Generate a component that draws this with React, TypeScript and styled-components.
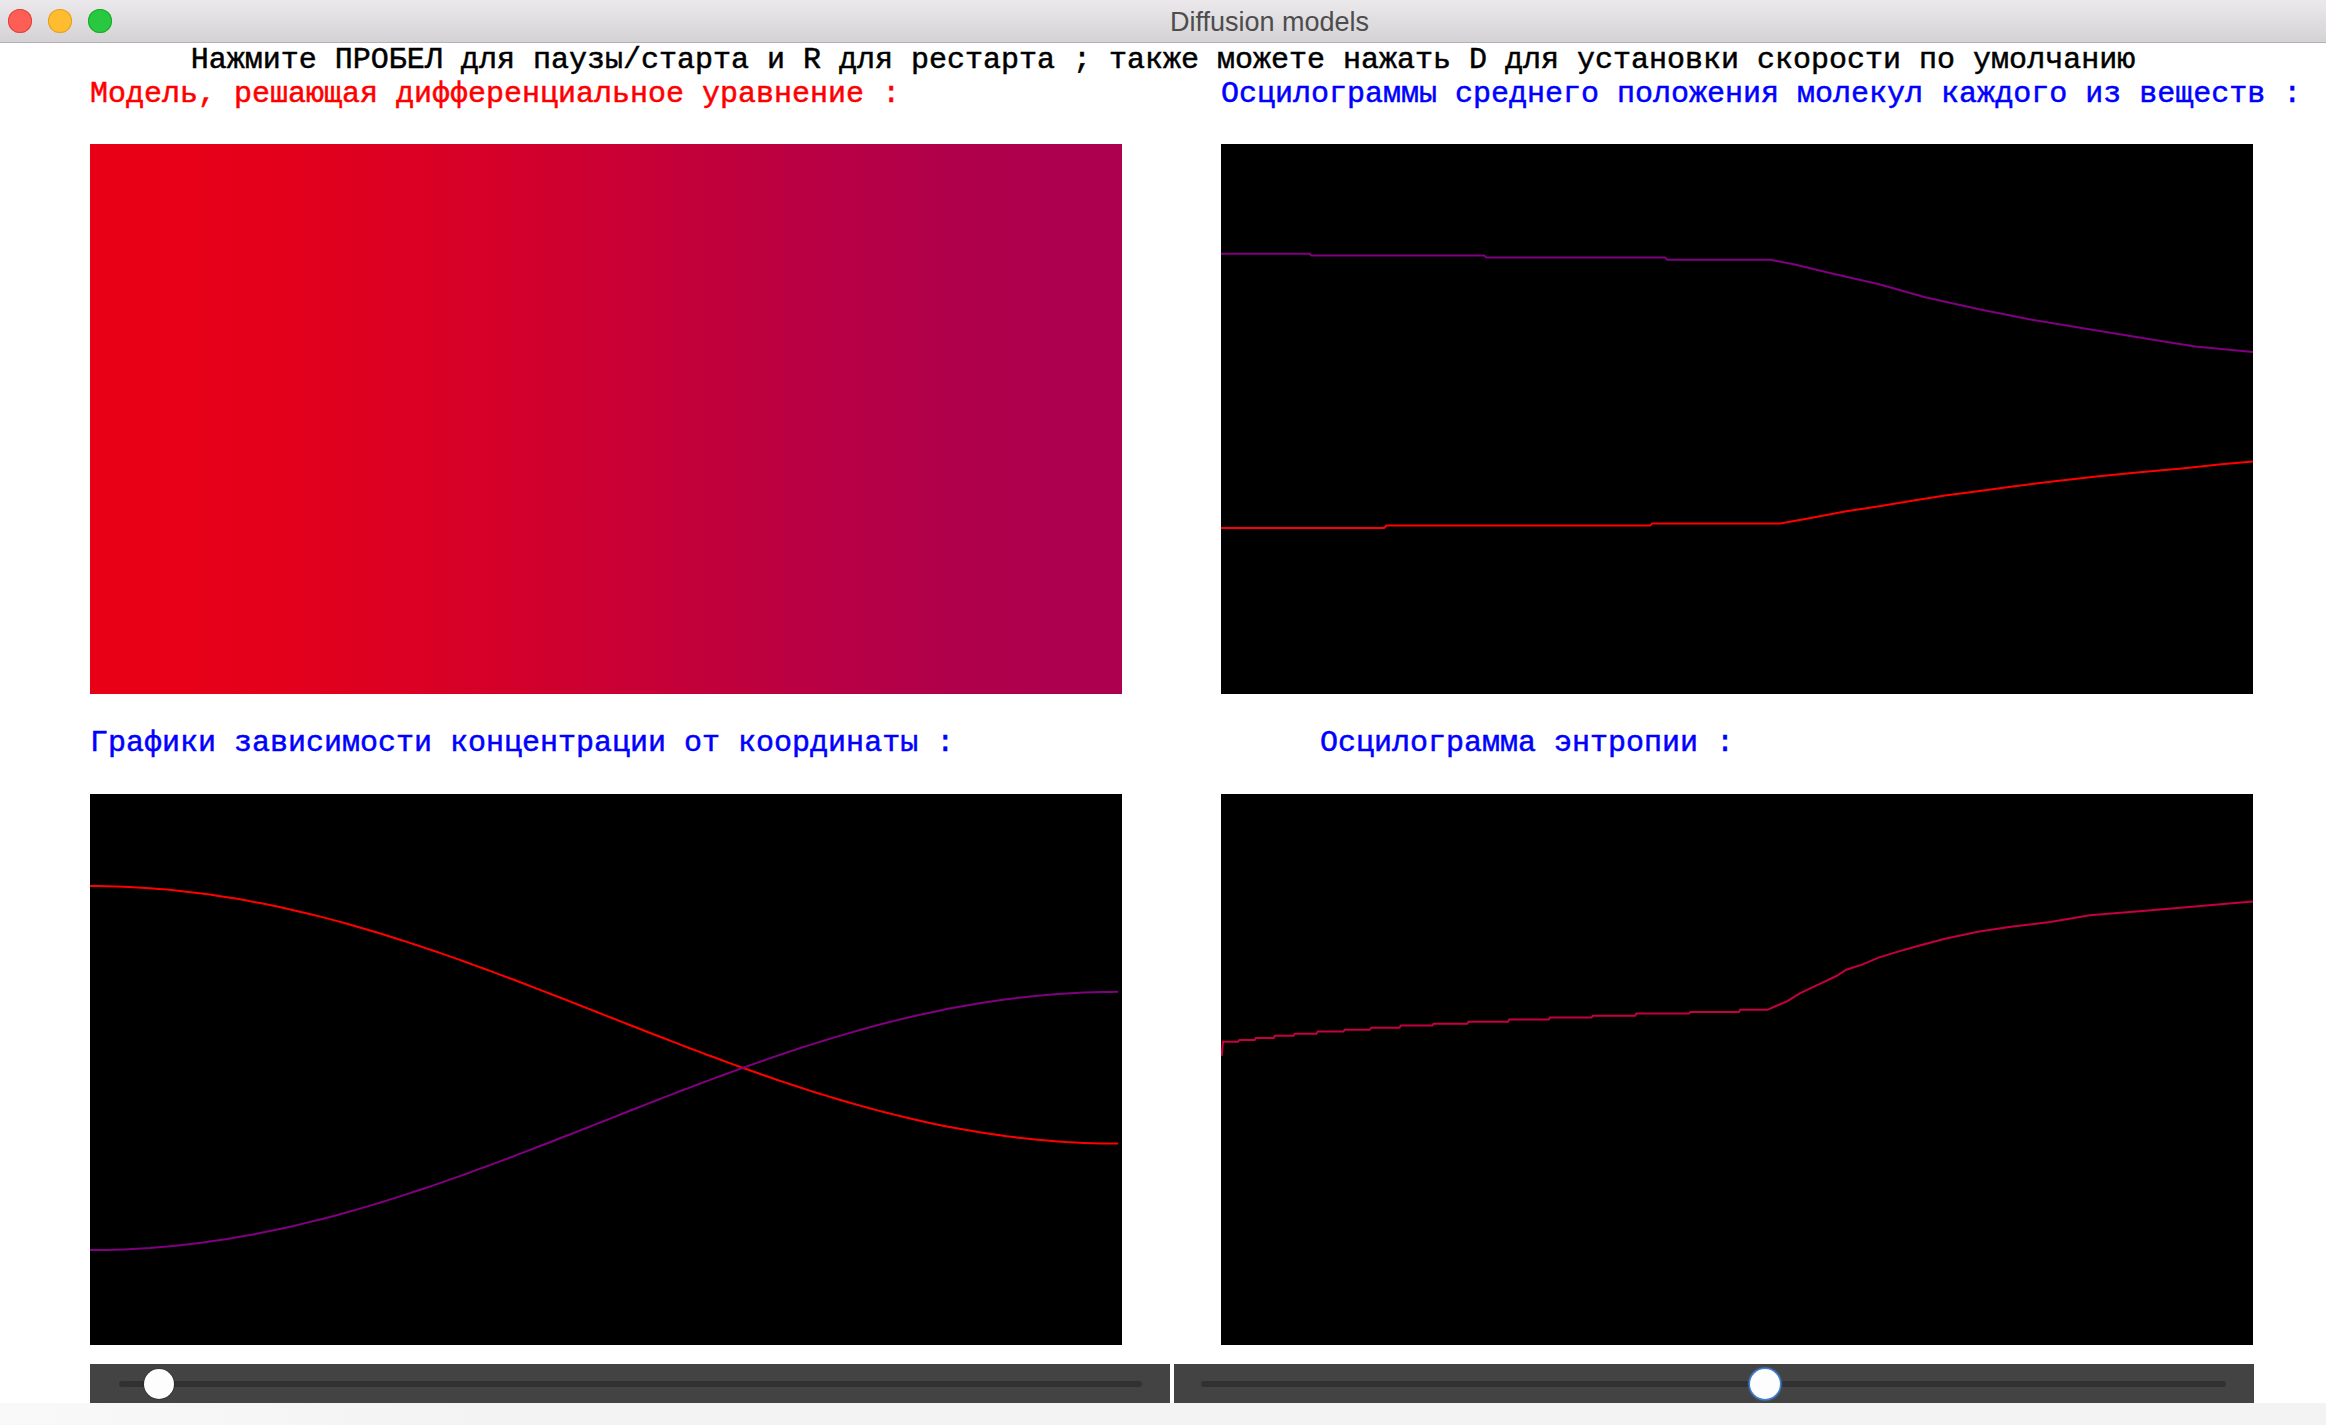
import React from "react";
import styled, { createGlobalStyle } from "styled-components";

const GlobalStyle = createGlobalStyle`
  html, body {
    margin: 0;
    padding: 0;
    background: #ffffff;
  }
  body {
    width: 2326px;
    height: 1425px;
    overflow: hidden;
  }
`;

const MONO = `"Liberation Mono", "Courier New", monospace`;

/* ---------- window chrome ---------- */

const Window = styled.div`
  width: 2326px;
  height: 1425px;
  display: flex;
  flex-direction: column;
  background: #ffffff;
`;

const TitleBar = styled.header`
  flex: none;
  height: 42px;
  border-bottom: 1px solid #b3b1b3;
  background: linear-gradient(#ebe9eb, #d4d2d4);
  display: flex;
  align-items: center;
  padding-left: 8px;
`;

const Lights = styled.div`
  display: flex;
  gap: 16px;
`;

const Light = styled.span<{ $fill: string; $edge: string }>`
  width: 24px;
  height: 24px;
  border-radius: 50%;
  background: ${(p) => p.$fill};
  box-shadow: inset 0 0 0 1px ${(p) => p.$edge};
`;

const WindowTitle = styled.h1`
  margin: 2px 0 0 1058px;
  font: 400 27px/1 "Liberation Sans", Arial, sans-serif;
  color: #4d4d4d;
  white-space: nowrap;
`;

/* ---------- content ---------- */

const Main = styled.main`
  flex: none;
  display: flex;
  flex-direction: column;
  font-family: ${MONO};
  font-size: 30px;
  line-height: 29px;
  -webkit-text-stroke: 0.5px currentColor;
`;

const Hint = styled.p`
  margin: 3px 0 0;
  height: 29px;
  text-align: center;
  color: #000000;
  white-space: pre;
`;

const Dashboard = styled.section`
  display: grid;
  grid-template-columns: 1032px 1032px;
  column-gap: 99px;
  row-gap: 35px;
  padding-left: 90px;
  margin-top: 5px;
`;

const Cell = styled.div<{ $gap: number }>`
  display: flex;
  flex-direction: column;
  gap: ${(p) => p.$gap}px;
`;

const Caption = styled.h2<{ $color: string; $indent?: number }>`
  margin: 0;
  height: 29px;
  font: inherit;
  color: ${(p) => p.$color};
  padding-left: ${(p) => p.$indent ?? 0}px;
  white-space: pre;
`;

const Panel = styled.div<{ $h: number }>`
  height: ${(p) => p.$h}px;
  background: #000000;
  overflow: hidden;
  svg {
    display: block;
  }
`;

const gradientStops = (() => {
  const a = [232, 0, 23];
  const b = [173, 0, 78];
  const stops: string[] = [];
  for (let i = 0; i <= 20; i++) {
    const t = i / 20;
    const k = (1 - Math.cos(Math.PI * t)) / 2;
    const c = a.map((v, j) => Math.round(v + (b[j] - v) * k));
    stops.push(`rgb(${c[0]},${c[1]},${c[2]}) ${(t * 100).toFixed(1)}%`);
  }
  return stops.join(", ");
})();

const ModelField = styled.div`
  height: 550px;
  background: linear-gradient(90deg, ${gradientStops});
`;

/* ---------- sliders ---------- */

const SliderRow = styled.div`
  display: flex;
  gap: 4px;
  padding-left: 90px;
  margin-top: 19px;
`;

const SliderBar = styled.div<{ $padL: number }>`
  box-sizing: border-box;
  width: 1080px;
  height: 39px;
  background: #434343;
  display: flex;
  align-items: center;
  padding: 0 28px 0 ${(p) => p.$padL}px;
`;

const Track = styled.div`
  position: relative;
  flex: 1;
  height: 6px;
  border-radius: 3px;
  background: #313131;
`;

const Thumb = styled.div<{ $pos: number; $focused?: boolean }>`
  position: absolute;
  top: 50%;
  left: calc(${(p) => (p.$pos * 100).toFixed(3)}% - 15px);
  width: 30px;
  height: 30px;
  margin-top: -15px;
  border-radius: 50%;
  background: #fdfdfd;
  box-shadow: ${(p) =>
    p.$focused
      ? "0 0 0 1.5px #3f7fd0, 0 0 2px 2px rgba(80,140,220,0.35)"
      : "0 0 1px 0.5px rgba(0,0,0,0.35)"};
`;

const Footer = styled.div`
  flex: 1;
  background: linear-gradient(90deg, #f9f9f9, #f3f3f3 20%, #f3f3f3);
`;

/* ---------- chart data ---------- */

type Pt = [number, number];

const toPoints = (pts: Pt[], w: number, h: number) =>
  pts.map(([x, y]) => `${((x * w) / 1568).toFixed(1)},${((y * h) / 1568).toFixed(1)}`).join(" ");

const meanPurple: Pt[] = [
  [0, 313], [135, 313], [137, 318], [400, 318], [403, 324], [675, 324], [678, 330], [835, 330],
  [870, 343], [930, 370], [1000, 400], [1070, 437], [1150, 470], [1230, 500], [1310, 525],
  [1400, 553], [1480, 577], [1568, 593],
];

const meanRed: Pt[] = [
  [0, 1095], [248, 1095], [251, 1088], [652, 1088], [655, 1082], [850, 1082], [900, 1065],
  [950, 1047], [1000, 1033], [1050, 1017], [1100, 1002], [1150, 990], [1200, 977], [1260, 963],
  [1330, 948], [1400, 935], [1460, 925], [1520, 913], [1568, 905],
];

const entropy: Pt[] = [
  [1, 745], [3, 705], [26, 705], [28, 700], [51, 700], [53, 694], [80, 694], [82, 688],
  [110, 688], [112, 682], [145, 682], [147, 676], [186, 676], [188, 671], [226, 671],
  [228, 665], [271, 665], [273, 659], [321, 659], [323, 654], [374, 654], [376, 648],
  [436, 648], [438, 642], [498, 642], [500, 636], [563, 636], [565, 631], [629, 631],
  [631, 625], [711, 625], [713, 620], [787, 620], [789, 614], [830, 614], [845, 602],
  [860, 590], [880, 567], [910, 540], [935, 518], [950, 500], [975, 485], [1000, 465],
  [1030, 448], [1060, 432], [1100, 412], [1150, 392], [1200, 378], [1260, 364],
  [1320, 345], [1400, 333], [1480, 320], [1540, 310], [1568, 306],
];

const profile = (sign: number, mid: number, amp: number): Pt[] => {
  const out: Pt[] = [];
  for (let i = 0; i <= 120; i++) {
    const x = (i / 120) * 1562;
    out.push([x, mid + sign * amp * Math.cos((Math.PI * x) / 1562)]);
  }
  return out;
};

const concRed = profile(-1, 628.5, 366.5);
const concPurple = profile(1, 930.5, 367.5);

const RED = "#ff0000";
const PURPLE = "#800080";
const CRIMSON = "#c6003e";

type Series = { pts: Pt[]; color: string };

const Plot: React.FC<{ w: number; h: number; series: Series[] }> = ({ w, h, series }) => (
  <svg width={w} height={h} viewBox={`0 0 ${w} ${h}`}>
    {series.map((s, i) => (
      <polyline
        key={i}
        points={toPoints(s.pts, w, h)}
        fill="none"
        stroke={s.color}
        strokeWidth={2}
        strokeLinejoin="miter"
      />
    ))}
  </svg>
);

export default function App() {
  return (
    <>
      <GlobalStyle />
      <Window>
        <TitleBar>
          <Lights>
            <Light $fill="#fd5f57" $edge="#e0443e" />
            <Light $fill="#febc2e" $edge="#dea123" />
            <Light $fill="#28c840" $edge="#1aab29" />
          </Lights>
          <WindowTitle>Diffusion models</WindowTitle>
        </TitleBar>

        <Main>
          <Hint>
            Нажмите ПРОБЕЛ для паузы/старта и R для рестарта ; также можете нажать D для установки скорости по умолчанию
          </Hint>

          <Dashboard>
            <Cell $gap={35}>
              <Caption $color="#ff0000">Модель, решающая дифференциальное уравнение :</Caption>
              <ModelField />
            </Cell>
            <Cell $gap={35}>
              <Caption $color="#0000ff">Осцилограммы среднего положения молекул каждого из веществ :</Caption>
              <Panel $h={550}>
                <Plot
                  w={1032}
                  h={550}
                  series={[
                    { pts: meanPurple, color: PURPLE },
                    { pts: meanRed, color: RED },
                  ]}
                />
              </Panel>
            </Cell>
            <Cell $gap={36}>
              <Caption $color="#0000ff">Графики зависимости концентрации от координаты :</Caption>
              <Panel $h={551}>
                <Plot
                  w={1032}
                  h={551}
                  series={[
                    { pts: concRed, color: RED },
                    { pts: concPurple, color: PURPLE },
                  ]}
                />
              </Panel>
            </Cell>
            <Cell $gap={36}>
              <Caption $color="#0000ff" $indent={99}>Осцилограмма энтропии :</Caption>
              <Panel $h={551}>
                <Plot w={1032} h={551} series={[{ pts: entropy, color: CRIMSON }]} />
              </Panel>
            </Cell>
          </Dashboard>

          <SliderRow>
            <SliderBar $padL={29}>
              <Track>
                <Thumb $pos={40 / 1023} />
              </Track>
            </SliderBar>
            <SliderBar $padL={27}>
              <Track>
                <Thumb $pos={564.5 / 1025} $focused />
              </Track>
            </SliderBar>
          </SliderRow>
        </Main>
        <Footer />
      </Window>
    </>
  );
}
